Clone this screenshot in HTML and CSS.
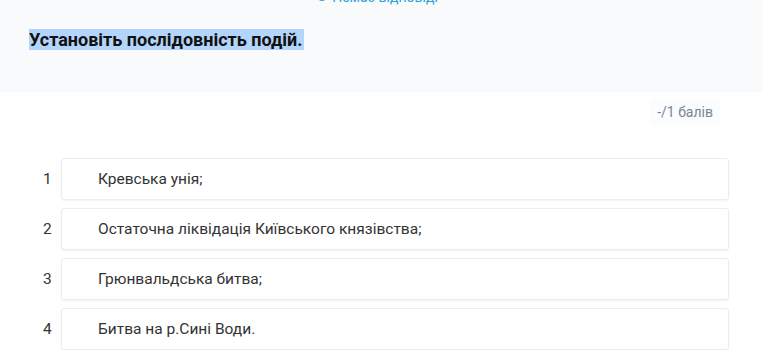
FILE: index.html
```html
<!DOCTYPE html>
<html lang="uk">
<head>
<meta charset="utf-8">
<link rel="stylesheet" href="styles.css">
</head>
<body>
<div class="header">
  <div class="status"><span class="dot"></span>Немає відповіді</div>
  <h2 class="title"><span class="sel">Установіть послідовність подій.</span></h2>
</div>
<div class="score-row"><span class="score">-/1 балів</span></div>
<ol class="items">
  <li class="item"><span class="num">1</span><div class="box">Кревська унія;</div></li>
  <li class="item"><span class="num">2</span><div class="box">Остаточна ліквідація Київського князівства;</div></li>
  <li class="item"><span class="num">3</span><div class="box">Грюнвальдська битва;</div></li>
  <li class="item"><span class="num">4</span><div class="box">Битва на р.Сині Води.</div></li>
</ol>
</body>
</html>
```
FILE: styles.css
```css
* { box-sizing: border-box; }
body {
  margin: 0;
  font-family: Roboto, "Noto Sans", sans-serif;
  background: #fff;
  color: #333;
  overflow: hidden;
}
.header {
  display: flow-root;
  background: #f8fafc;
  height: 92px;
  padding: 0 29px;
}
.status {
  height: 16px;
  margin-top: -11px;
  display: flex;
  align-items: center;
  justify-content: center;
  gap: 6px;
  color: #2aa3d8;
  font-size: 14px;
  line-height: 16px;
  padding-right: 6px;
}
.dot {
  width: 8px;
  height: 8px;
  border-radius: 50%;
  border: 2px solid #2aa3d8;
}
.title {
  margin: 23px 0 0;
  font-size: 18px;
  font-weight: 700;
  color: #111;
  line-height: 23px;
}
.sel { background: #b4d5fb; padding: 0 1px 0 0; }
.score-row {
  display: flex;
  justify-content: flex-end;
  padding: 8px 42px 0 0;
}
.score {
  font-size: 14px;
  color: #7a8591;
  background: #fafcfe;
  padding: 3px 7px;
  line-height: 18px;
}
.items {
  list-style: none;
  margin: 34px 0 0;
  padding: 0 33px 0 36px;
  display: flex;
  flex-direction: column;
  gap: 8px;
}
.item {
  display: flex;
  align-items: center;
}
.num {
  width: 25px;
  font-size: 15.5px;
  color: #333;
  padding-left: 7px;
}
.box {
  flex: 1;
  height: 42px;
  border: 1px solid #ececec;
  border-radius: 3px;
  box-shadow: 0 1px 2px rgba(0,0,0,0.05);
  display: flex;
  align-items: center;
  padding-left: 36px;
  font-size: 15.5px;
  color: #333;
}
```
